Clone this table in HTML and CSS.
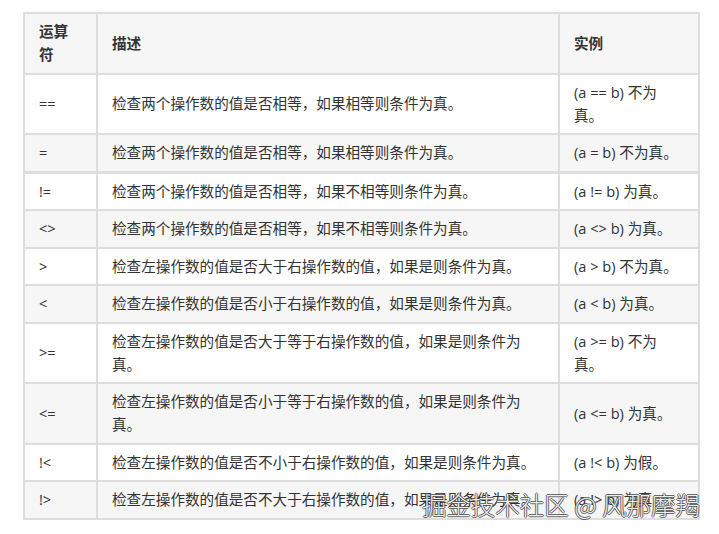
FILE: index.html
```html
<!DOCTYPE html>
<html lang="zh-CN">
<head>
<meta charset="utf-8">
<title>运算符</title>
<link rel="stylesheet" href="styles.css">
</head>
<body>
<div class="page">
  <table class="ops">
    <thead>
      <tr>
        <th class="c-op">运算符</th>
        <th class="c-desc">描述</th>
        <th class="c-ex">实例</th>
      </tr>
    </thead>
    <tbody>
      <tr><td>==</td><td>检查两个操作数的值是否相等，如果相等则条件为真。</td><td>(a == b) 不为真。</td></tr>
      <tr class="seam"><td>=</td><td>检查两个操作数的值是否相等，如果相等则条件为真。</td><td>(a = b) 不为真。</td></tr>
      <tr><td>!=</td><td>检查两个操作数的值是否相等，如果不相等则条件为真。</td><td>(a != b) 为真。</td></tr>
      <tr><td>&lt;&gt;</td><td>检查两个操作数的值是否相等，如果不相等则条件为真。</td><td>(a &lt;&gt; b) 为真。</td></tr>
      <tr><td>&gt;</td><td>检查左操作数的值是否大于右操作数的值，如果是则条件为真。</td><td>(a &gt; b) 不为真。</td></tr>
      <tr><td>&lt;</td><td>检查左操作数的值是否小于右操作数的值，如果是则条件为真。</td><td>(a &lt; b) 为真。</td></tr>
      <tr><td>&gt;=</td><td>检查左操作数的值是否大于等于右操作数的值，如果是则条件为真。</td><td>(a &gt;= b) 不为真。</td></tr>
      <tr><td>&lt;=</td><td>检查左操作数的值是否小于等于右操作数的值，如果是则条件为真。</td><td>(a &lt;= b) 为真。</td></tr>
      <tr><td>!&lt;</td><td>检查左操作数的值是否不小于右操作数的值，如果是则条件为真。</td><td>(a !&lt; b) 为假。</td></tr>
      <tr><td>!&gt;</td><td>检查左操作数的值是否不大于右操作数的值，如果是则条件为真。</td><td>(a !&gt; b) 为真。</td></tr>
    </tbody>
  </table>
  <div class="watermark">掘金技术社区 @ 风那摩羯</div>
</div>
</body>
</html>
```

FILE: styles.css
```css
html, body {
  margin: 0;
  padding: 0;
  background: #ffffff;
}

body {
  font-family: "Open Sans", "Noto Sans CJK SC", sans-serif;
  font-size: 14.6px;
  color: #333333;
}

.page {
  position: relative;
  width: 719px;
  height: 534px;
  padding: 12px 0 0 23px;
  box-sizing: border-box;
}

.ops {
  table-layout: fixed;
  width: 677px;
  border-collapse: separate;
  border-spacing: 0;
  border-top: 2px solid #dddddd;
  border-left: 2px solid #dddddd;
}

.ops th,
.ops td {
  box-sizing: border-box;
  padding: 6.25px 14px;
  line-height: 23px;
  text-align: left;
  vertical-align: middle;
  border-right: 2px solid #dddddd;
  border-bottom: 2px solid #dddddd;
  font-weight: normal;
}

.ops th {
  font-weight: bold;
  background: #f6f6f6;
}

.ops .c-op { width: 73px; }
.ops .c-desc { width: 462px; }
.ops .c-ex { width: 140px; }

.ops tbody tr:nth-child(odd) td { background: #ffffff; }
.ops tbody tr:nth-child(even) td { background: #f6f6f6; }

.ops tr.seam td { border-bottom-width: 3px; }

.watermark {
  position: absolute;
  right: 19px;
  bottom: 14px;
  font-family: "Noto Sans CJK SC", sans-serif;
  font-size: 24.5px;
  font-weight: 300;
  line-height: 30px;
  color: rgba(255, 255, 255, 0.92);
  white-space: nowrap;
  text-shadow:
    1px 0 0 rgba(70, 70, 70, 0.8),
    -1px 0 0 rgba(70, 70, 70, 0.8),
    0 1px 0 rgba(70, 70, 70, 0.8),
    0 -1px 0 rgba(70, 70, 70, 0.8);
}
```
